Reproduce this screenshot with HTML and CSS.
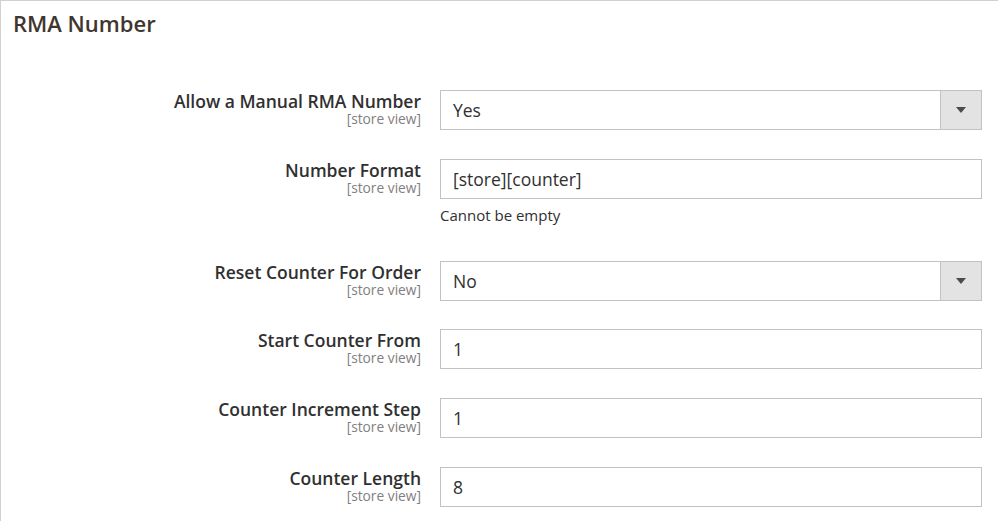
FILE: index.html
```html
<!DOCTYPE html>
<html>
<head>
<meta charset="utf-8">
<link rel="stylesheet" href="styles.css">
</head>
<body>
<div class="section">
  <h2 class="title">RMA Number</h2>
  <div class="form">
    <div class="row">
      <div class="label"><span class="name">Allow a Manual RMA Number</span><span class="scope">[store view]</span></div>
      <div class="control">
        <div class="select"><span class="value">Yes</span><span class="arrow"><span class="tri"></span></span></div>
      </div>
    </div>
    <div class="row">
      <div class="label"><span class="name">Number Format</span><span class="scope">[store view]</span></div>
      <div class="control">
        <div class="input">[store][counter]</div>
        <div class="note">Cannot be empty</div>
      </div>
    </div>
    <div class="row">
      <div class="label"><span class="name">Reset Counter For Order</span><span class="scope">[store view]</span></div>
      <div class="control">
        <div class="select"><span class="value">No</span><span class="arrow"><span class="tri"></span></span></div>
      </div>
    </div>
    <div class="row">
      <div class="label"><span class="name">Start Counter From</span><span class="scope">[store view]</span></div>
      <div class="control"><div class="input">1</div></div>
    </div>
    <div class="row">
      <div class="label"><span class="name">Counter Increment Step</span><span class="scope">[store view]</span></div>
      <div class="control"><div class="input">1</div></div>
    </div>
    <div class="row">
      <div class="label"><span class="name">Counter Length</span><span class="scope">[store view]</span></div>
      <div class="control"><div class="input">8</div></div>
    </div>
  </div>
</div>
</body>
</html>
```

FILE: styles.css
```css
html, body {
  margin: 0;
  padding: 0;
  background: #fff;
}
body {
  font-family: "Open Sans", "Liberation Sans", sans-serif;
  color: #303030;
  width: 998px;
  height: 521px;
  overflow: hidden;
}
.section {
  border-top: 1px solid #d1d1d1;
  border-left: 1px solid #d1d1d1;
  height: 520px;
}
.title {
  margin: 0;
  padding: 7px 0 0 12px;
  font-size: 22px;
  font-weight: 600;
  line-height: 30px;
  color: #41362f;
  height: 89px;
  box-sizing: border-box;
}
.form {
  display: flex;
  flex-direction: column;
  gap: 28.75px;
}
.row {
  display: grid;
  grid-template-columns: 420px 542px;
  column-gap: 19px;
}
.label {
  display: flex;
  flex-direction: column;
  align-items: flex-end;
}
.name {
  font-size: 17.5px;
  font-weight: 600;
  line-height: 22px;
  color: #303030;
}
.scope {
  font-size: 13.75px;
  line-height: 16px;
  color: #808080;
  margin-top: -1px;
}
.input, .select {
  box-sizing: border-box;
  height: 40px;
  border: 1px solid #c2c2c2;
  font-size: 17.5px;
  color: #303030;
  display: flex;
  align-items: center;
  padding-left: 12px;
  background: #fff;
}
.select {
  padding-left: 0;
}
.select .value {
  flex: 1;
  padding-left: 12px;
}
.arrow {
  width: 41px;
  height: 100%;
  background: #e3e3e3;
  border-left: 1px solid #c2c2c2;
  display: flex;
  align-items: center;
  justify-content: center;
  box-sizing: border-box;
}
.tri {
  width: 0;
  height: 0;
  border-left: 5px solid transparent;
  border-right: 5px solid transparent;
  border-top: 6px solid #514943;
}
.note {
  font-size: 15px;
  line-height: 20px;
  padding: 6px 0 7px 0;
  color: #303030;
}
```
